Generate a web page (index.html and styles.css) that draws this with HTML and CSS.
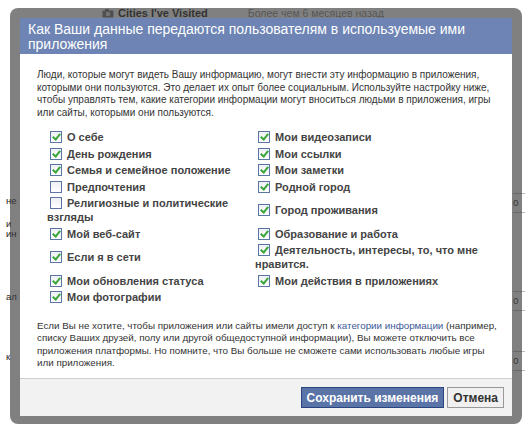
FILE: index.html
```html
<!DOCTYPE html>
<html lang="ru">
<head>
    <meta charset="UTF-8">
    <title>Приложения и доступ к данным</title>
    <link rel="stylesheet" href="styles.css">
</head>
<body>
    <div class="page">
        <div class="feed-top">
            <span class="app-icon">
                <svg width="12" height="9" viewBox="0 0 12 9"><rect x="0.5" y="1.5" width="11" height="7" rx="1" fill="#777"/><circle cx="6" cy="5" r="2.3" fill="#ddd"/><rect x="3" y="0" width="4" height="2" fill="#777"/></svg>
            </span>
            <span class="app-name">Cities I've Visited</span>
            <span class="stamp">Более чем 6 месяцев назад</span>
        </div>
        <div class="feed-main">
            <div class="feed-left">
                <div class="frag f1">не</div>
                <div class="frag f2">и</div>
                <div class="frag f3">ин</div>
                <div class="frag f4">ал</div>
                <div class="frag f5">к</div>
            </div>
            <div class="feed-right">
                <div class="tab t1">о</div>
                <div class="tab t2">о</div>
                <div class="tab t3">о</div>
            </div>
        </div>
    </div>

    <div class="dialog">
        <div class="dialog-inner">
            <div class="dialog-title">Как Ваши данные передаются пользователям в используемые ими приложения</div>
            <div class="dialog-body">
                <p class="intro">Люди, которые могут видеть Вашу информацию, могут внести эту информацию в приложения, которыми они пользуются. Это делает их опыт более социальным. Используйте настройку ниже, чтобы управлять тем, какие категории информации могут вноситься людьми в приложения, игры или сайты, которыми они пользуются.</p>

                <div class="perm-grid">
                    <div class="perm"><span class="cb on"></span>О себе</div>
                    <div class="perm"><span class="cb on"></span>Мои видеозаписи</div>
                    <div class="perm"><span class="cb on"></span>День рождения</div>
                    <div class="perm"><span class="cb on"></span>Мои ссылки</div>
                    <div class="perm"><span class="cb on"></span>Семья и семейное положение</div>
                    <div class="perm"><span class="cb on"></span>Мои заметки</div>
                    <div class="perm"><span class="cb"></span>Предпочтения</div>
                    <div class="perm"><span class="cb on"></span>Родной город</div>
                    <div class="perm"><span class="cb"></span>Религиозные и политические взгляды</div>
                    <div class="perm"><span class="cb on"></span>Город проживания</div>
                    <div class="perm"><span class="cb on"></span>Мой веб-сайт</div>
                    <div class="perm"><span class="cb on"></span>Образование и работа</div>
                    <div class="perm"><span class="cb on"></span>Если я в сети</div>
                    <div class="perm"><span class="cb on"></span>Деятельность, интересы, то, что мне нравится.</div>
                    <div class="perm"><span class="cb on"></span>Мои обновления статуса</div>
                    <div class="perm"><span class="cb on"></span>Мои действия в приложениях</div>
                    <div class="perm"><span class="cb on"></span>Мои фотографии</div>
                </div>

                <p class="note"><span>Если Вы не хотите, чтобы приложения или сайты имели доступ к</span> <a href="#">категории информации</a> <span>(например,</span> списку Ваших друзей, полу или другой общедоступной информации), Вы можете отключить все приложения платформы. Но помните, что Вы больше не сможете сами использовать любые игры или приложения.</p>
            </div>
            <div class="dialog-footer">
                <button class="btn btn-primary">Сохранить изменения</button>
                <button class="btn">Отмена</button>
            </div>
        </div>
    </div>
</body>
</html>
```

FILE: styles.css
```css
body {
    margin: 0;
    background-color: #fff;
    font-family: "Liberation Sans", Arial, sans-serif;
    color: #333;
}
.page {
    width: 530px;
    height: 430px;
    overflow: hidden;
}
.feed-top {
    display: flex;
    align-items: center;
    height: 12px;
    padding-top: 7px;
    font-size: 11px;
}
.app-icon {
    margin-left: 102px;
    margin-right: 4px;
    display: flex;
}
.app-name {
    font-weight: bold;
    color: #222;
}
.stamp {
    margin-left: 40px;
    color: #888;
    font-size: 10.5px;
}
.feed-main {
    display: flex;
    justify-content: space-between;
}
.feed-left {
    margin-left: 6px;
    font-size: 9.5px;
    line-height: 11px;
    color: #222;
}
.f1 { margin-top: 176px; }
.f2 { margin-top: 12px; }
.f3 { margin-top: -1px; }
.f4 { margin-top: 52px; }
.f5 { margin-top: 49px; }
.feed-right {
    width: 12px;
    margin-right: 5px;
}
.tab {
    height: 18px;
    border-top: 1px solid #bbb;
    border-bottom: 1px solid #bbb;
    font-size: 10px;
    line-height: 18px;
    color: #333;
}
.t1 { margin-top: 174px; }
.t2 { margin-top: 78px; }
.t3 { margin-top: 40px; }

/* dialog */
.dialog {
    position: absolute;
    left: 10px;
    top: 8px;
    width: 512px;
    padding: 10px 10px 8px 10px;
    box-sizing: border-box;
    background-color: rgba(60, 60, 60, 0.65);
    border-radius: 8px;
}
.dialog-inner {
    background-color: #fff;
}
.dialog-title {
    height: 36px;
    box-sizing: border-box;
    padding: 4px 8px 2px;
    background-color: #6d84b4;
    color: #fff;
    font-size: 14px;
    line-height: 14.5px;
}
.dialog-body {
    height: 324px;
    box-sizing: border-box;
    padding: 15px 15px 0 17px;
    font-size: 10px;
    line-height: 12.5px;
}
.intro {
    margin: 0 0 10px;
}
.perm-grid {
    display: grid;
    grid-template-columns: 208px 1fr;
    align-items: center;
    margin-left: 10px;
}
.perm {
    padding: 1.25px 0;
    font-size: 11px;
    line-height: 14px;
    font-weight: bold;
    color: #444;
}
.cb {
    display: inline-block;
    width: 10px;
    height: 10px;
    margin: 0 5px 0 3px;
    border: 1px solid #5b74a8;
    background: linear-gradient(#eef0f4, #fff);
    vertical-align: -2px;
    position: relative;
}
.cb.on::after {
    content: "";
    position: absolute;
    left: 3px;
    top: 0px;
    width: 3px;
    height: 6px;
    border: solid #3aa53a;
    border-width: 0 2px 2px 0;
    transform: rotate(40deg);
}
.note {
    margin: 14px 0 0;
    font-size: 9.8px;
}
.note a {
    color: #3b5998;
    text-decoration: none;
}
.dialog-footer {
    display: flex;
    justify-content: flex-end;
    gap: 3px;
    padding: 8px;
    background-color: #f2f2f2;
    border-top: 1px solid #ccc;
}
.btn {
    height: 21px;
    padding: 0 5px;
    font-family: "Liberation Sans", Arial, sans-serif;
    font-size: 12px;
    font-weight: bold;
    color: #333;
    background-color: #f0f0f0;
    border: 1px solid #999;
    cursor: pointer;
}
.btn-primary {
    color: #fff;
    background-color: #5b74a8;
    border-color: #29447e;
}
```
